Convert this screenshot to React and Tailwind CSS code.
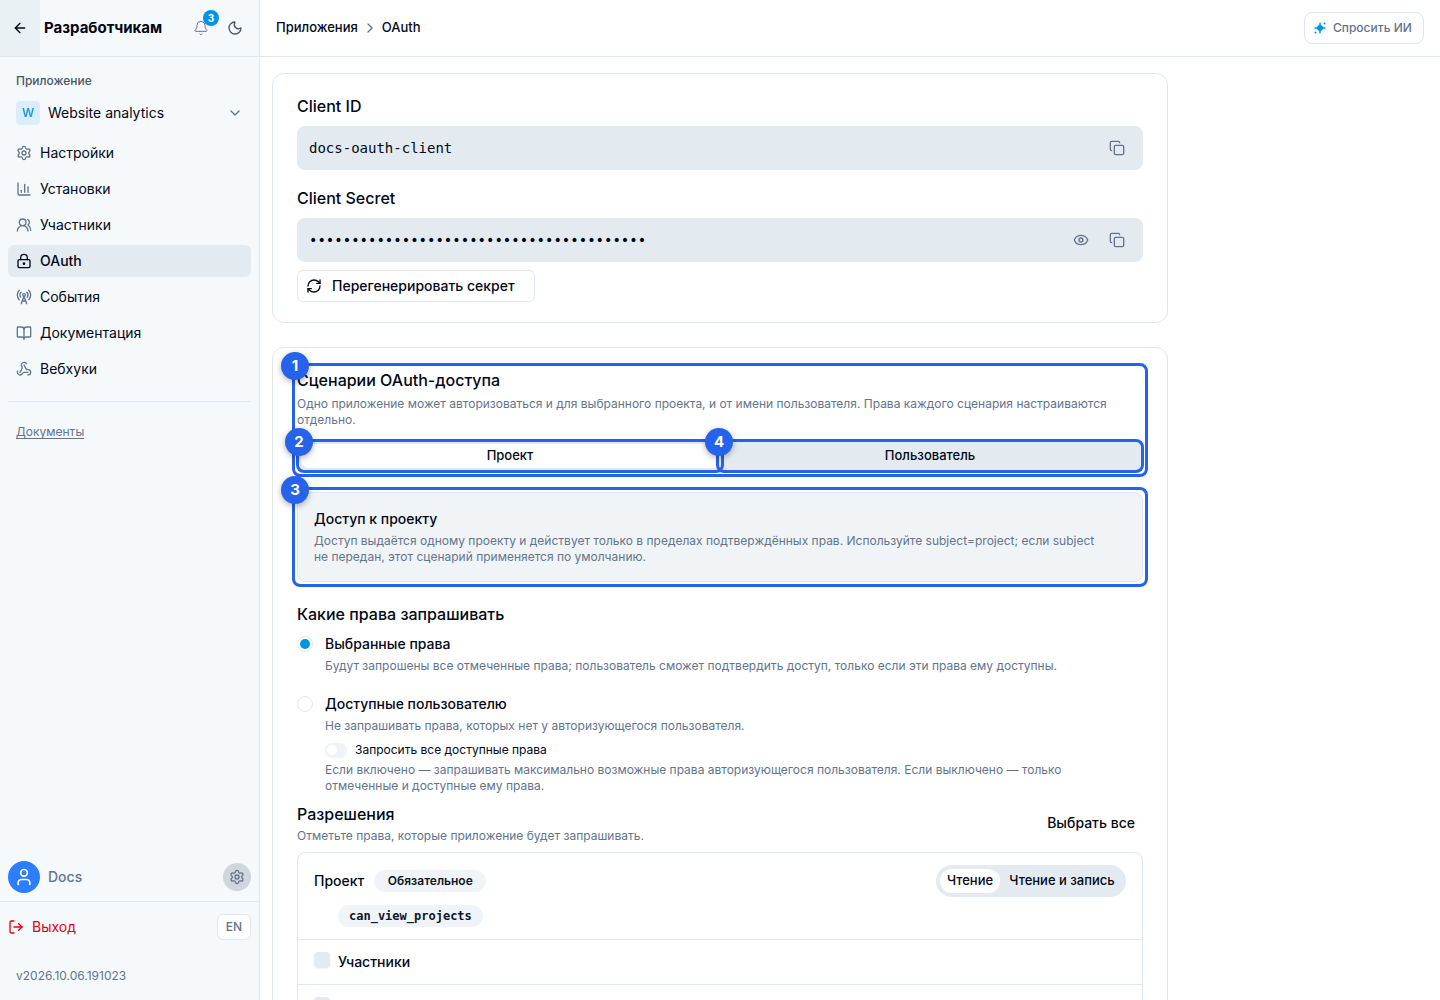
import { useState } from 'react';
import {
  ArrowLeft,
  Bell,
  BookOpen,
  ChartColumn,
  ChevronDown,
  ChevronRight,
  Copy,
  Eye,
  LockKeyhole,
  LogOut,
  Moon,
  RadioTower,
  RefreshCw,
  Settings,
  User,
  UsersRound,
  Webhook,
} from 'lucide-react';

const NAV = [
  { label: 'Настройки', icon: Settings },
  { label: 'Установки', icon: ChartColumn },
  { label: 'Участники', icon: UsersRound },
  { label: 'OAuth', icon: LockKeyhole, active: true },
  { label: 'События', icon: RadioTower },
  { label: 'Документация', icon: BookOpen },
  { label: 'Вебхуки', icon: Webhook },
];

const SCENARIOS = [
  { id: 'project', label: 'Проект', step: 2 },
  { id: 'user', label: 'Пользователь', step: 4 },
];

const MODES = [
  { label: 'Чтение', width: 'min-w-15' },
  { label: 'Чтение и запись', width: 'min-w-30' },
];

const GROUPS = [{ id: 'members', name: 'Участники' }, { id: 'events' }];

function SparkleIcon() {
  return (
    <svg width="14" height="14" viewBox="0 0 14 14" fill="#0095e0" aria-hidden="true">
      <path d="M7 1.500c.5 3 2 4.800 5.500 5.500-3.500.7-5 2.500-5.500 5.500C6.500 9.500 5 7.700 1.500 7 5 6.300 6.500 4.500 7 1.500z" stroke="#0095e0" strokeWidth="0.6" />
      <circle cx="11.500" cy="2.500" r="1" />
      <circle cx="2.500" cy="11.500" r="1" />
    </svg>
  );
}

// numbered outline drawn around its nearest relative parent
function Marker({ step, className = '-inset-[5px]' }) {
  return (
    <div className={`pointer-events-none absolute z-10 rounded-lg border-3 border-[#2563eb] ${className}`}>
      <span className="absolute -top-3.5 -left-3.5 flex size-7 items-center justify-center rounded-full bg-[#2563eb] text-[15px] font-bold text-white shadow-[0_2px_6px_rgba(0,0,0,0.3)]">
        {step}
      </span>
    </div>
  );
}

function Sidebar() {
  return (
    <aside className="flex w-65 shrink-0 flex-col border-r border-[#e0e7ef] bg-[#f5f9fc]">
      <div className="flex h-14.25 items-center border-b border-[#e0e7ef] pr-4">
        <button aria-label="Назад" className="flex h-full w-10 items-center justify-center bg-[#eaf1f4]">
          <ArrowLeft size={16} />
        </button>
        <span className="ml-1 flex-1 text-[15px] font-bold">Разработчикам</span>
        <button aria-label="Уведомления" className="relative text-[#64748b]">
          <Bell size={16} strokeWidth={1.5} />
          <span className="absolute -top-2.5 -right-2.5 flex size-4 items-center justify-center rounded-full bg-[#0095e0] text-[10px] font-bold text-white">
            3
          </span>
        </button>
        <button aria-label="Тёмная тема" className="ml-4.5 text-[#4b5563]">
          <Moon size={16} />
        </button>
      </div>

      <div className="px-2 pt-4">
        <div className="px-2 text-xs font-medium text-[#4b5563]">Приложение</div>
        <button className="mt-2 flex h-8 w-full items-center gap-2 px-2 text-left text-sm">
          <span className="flex size-6 items-center justify-center rounded bg-[#d9eefa] text-xs font-medium text-[#0095e0]">W</span>
          <span className="flex-1">Website analytics</span>
          <ChevronDown size={16} className="text-[#64748b]" />
        </button>
        <nav className="mt-2 flex flex-col gap-1">
          {NAV.map(({ label, icon: Icon, active }) => (
            <a
              key={label}
              href="#"
              className={`flex h-8 items-center gap-2 rounded-md px-2 text-sm ${active ? 'bg-[#e3ebf1] font-medium' : ''}`}
            >
              <Icon size={16} className={active ? '' : 'text-[#64748b]'} />
              {label}
            </a>
          ))}
        </nav>
        <hr className="mt-4 border-[#e0e7ef]" />
        <a href="#" className="mt-5.5 ml-2 inline-block text-xs text-[#64748b] underline underline-offset-2">Документы</a>
      </div>

      <div className="mt-auto">
        <div className="flex items-center gap-2 border-b border-[#e0e7ef] px-2 pb-2">
          <span className="flex size-8 items-center justify-center rounded-full bg-[#2b7fff] text-white">
            <User size={20} />
          </span>
          <span className="flex-1 text-sm font-medium text-[#64748b]">Docs</span>
          <button aria-label="Настройки профиля" className="flex size-7 items-center justify-center rounded-full bg-[#d1d5dc] text-[#64748b]">
            <Settings size={16} />
          </button>
        </div>
        <div className="flex items-center justify-between px-2 pt-3">
          <button className="flex items-center gap-2 text-sm text-[#e7000b]">
            <LogOut size={16} />
            Выход
          </button>
          <button className="h-6.5 rounded-md border border-[#e0e7ef] bg-white px-2 text-xs font-medium text-[#64748b]">EN</button>
        </div>
        <div className="px-4 pt-7 pb-4 text-xs text-[#64748b]">v2026.10.06.191023</div>
      </div>
    </aside>
  );
}

function SecretField({ label, value, hidden }) {
  return (
    <div>
      <h2 className="mb-3 text-base leading-4 font-medium">{label}</h2>
      <div className="flex h-11 items-center rounded-lg bg-[#e3ebf1] pr-4.5 pl-3 text-[#64748b]">
        <code className="flex-1 font-['DejaVu_Sans_Mono',monospace] text-sm text-[#020817]">{value}</code>
        {hidden && (
          <button aria-label="Показать">
            <Eye size={16} />
          </button>
        )}
        <button aria-label="Копировать" className="ml-5">
          <Copy size={16} />
        </button>
      </div>
    </div>
  );
}

function RightsOption({ id, title, text, checked, onChange, children }) {
  return (
    <div className="flex gap-3">
      <input
        type="radio"
        id={id}
        name="rights"
        checked={checked}
        onChange={onChange}
        className="mt-0.5 size-4 shrink-0 appearance-none rounded-full border border-[#e0e7ef] bg-white bg-clip-content p-[2px] checked:bg-[#0095e0]"
      />
      <div>
        <label htmlFor={id} className="block text-sm font-medium">{title}</label>
        <p className="mt-1 text-xs text-[#64748b]">{text}</p>
        {children}
      </div>
    </div>
  );
}

export default function App() {
  const [scenario, setScenario] = useState('project');
  const [rights, setRights] = useState('selected');
  const [access, setAccess] = useState('Чтение');

  return (
    <div className="flex h-screen bg-white font-['Inter',sans-serif] text-[#020817]">
      <Sidebar />
      <div className="flex min-w-0 flex-1 flex-col">
        <header className="flex h-14.25 shrink-0 items-center justify-between border-b border-[#e0e7ef] px-4">
          <nav className="flex items-center gap-1 text-[13px] font-medium">
            <a href="#">Приложения</a>
            <ChevronRight size={16} className="text-[#64748b]" />
            <span>OAuth</span>
          </nav>
          <button className="flex h-8 min-w-30 items-center gap-1.5 rounded-lg border border-[#e0e7ef] px-2 text-xs font-medium text-[#64748b]">
            <SparkleIcon />
            Спросить ИИ
          </button>
        </header>

        <main className="flex-1 overflow-y-auto px-3 py-4 [scrollbar-width:none]">
          <div className="flex max-w-4xl flex-col gap-6">
            <section className="rounded-xl border border-[#e0e7ef] px-6 pt-6 pb-5">
              <div className="flex flex-col gap-5">
                <SecretField label="Client ID" value="docs-oauth-client" />
                <SecretField label="Client Secret" value={'•'.repeat(40)} hidden />
              </div>
              <button className="mt-2 flex h-8 min-w-59.5 items-center gap-2.5 rounded-md border border-[#e0e7ef] px-2 text-sm font-medium">
                <RefreshCw size={16} />
                Перегенерировать секрет
              </button>
            </section>

            <section className="rounded-xl border border-[#e0e7ef] p-6">
              <div className="relative">
                <Marker step={1} className="-inset-x-[5px] -top-[9px] -bottom-[5px]" />
                <h2 className="text-base leading-4 font-medium">Сценарии OAuth-доступа</h2>
                <p className="mt-2 text-xs text-[#64748b]">
                  Одно приложение может авторизоваться и для выбранного проекта, и от имени пользователя. Права каждого
                  сценария настраиваются отдельно.
                </p>
                <div role="tablist" className="mt-3 grid grid-cols-2 gap-0.5 rounded-lg bg-[#e3ebf1] p-1">
                  {SCENARIOS.map((s) => (
                    <button
                      key={s.id}
                      role="tab"
                      aria-selected={scenario === s.id}
                      onClick={() => setScenario(s.id)}
                      className={`relative h-6 rounded-lg text-[13px] font-medium ${scenario === s.id ? 'bg-white' : ''}`}
                    >
                      {s.label}
                      <Marker step={s.step} />
                    </button>
                  ))}
                </div>
              </div>

              <div className="relative mt-5 rounded-lg border border-[#e0e7ef] bg-[#f0f4f7] p-4">
                <Marker step={3} className="-inset-[6px]" />
                <h3 className="text-sm font-medium">Доступ к проекту</h3>
                <p className="mt-1 pr-4 text-xs text-[#64748b]">
                  Доступ выдаётся одному проекту и действует только в пределах подтверждённых прав. Используйте
                  subject=project; если subject не передан, этот сценарий применяется по умолчанию.
                </p>
              </div>

              <h2 className="mt-6 text-base leading-4 font-medium">Какие права запрашивать</h2>
              <div className="mt-3 flex flex-col gap-5">
                <RightsOption
                  id="rights-selected"
                  title="Выбранные права"
                  text="Будут запрошены все отмеченные права; пользователь сможет подтвердить доступ, только если эти права ему доступны."
                  checked={rights === 'selected'}
                  onChange={() => setRights('selected')}
                />
                <RightsOption
                  id="rights-available"
                  title="Доступные пользователю"
                  text="Не запрашивать права, которых нет у авторизующегося пользователя."
                  checked={rights === 'available'}
                  onChange={() => setRights('available')}
                >
                  <label className="mt-2 flex items-center gap-2 text-xs">
                    <input
                      type="checkbox"
                      role="switch"
                      className="h-3.5 w-5.5 appearance-none rounded-full bg-[#f0f4f8] p-0.5 shadow-xs before:block before:size-2.5 before:rounded-full before:bg-white checked:bg-[#0095e0] checked:before:ml-2"
                    />
                    Запросить все доступные права
                  </label>
                  <p className="mt-1 pr-4 text-xs text-[#64748b]">
                    Если включено — запрашивать максимально возможные права авторизующегося пользователя. Если выключено —
                    только отмеченные и доступные ему права.
                  </p>
                </RightsOption>
              </div>

              <div className="mt-3 flex items-start justify-between">
                <div>
                  <h2 className="text-base leading-4 font-medium">Разрешения</h2>
                  <p className="mt-1.5 text-xs text-[#64748b]">Отметьте права, которые приложение будет запрашивать.</p>
                </div>
                <button className="h-8.5 px-2 text-sm font-medium">Выбрать все</button>
              </div>

              <div className="mt-2 divide-y divide-[#e0e7ef] rounded-lg border border-[#e0e7ef]">
                <div className="px-4 py-3">
                  <div className="flex items-center gap-2.5">
                    <span className="text-sm font-medium">Проект</span>
                    <span className="min-w-28 rounded-full bg-[#f0f4f9] px-[11px] py-[3px] text-center text-xs font-semibold text-[#0f172a]">
                      Обязательное
                    </span>
                    <div className="ml-auto flex gap-0.5 rounded-full bg-[#e3ebf1] p-1">
                      {MODES.map(({ label, width }) => (
                        <button
                          key={label}
                          onClick={() => setAccess(label)}
                          className={`h-6 rounded-full px-1.5 text-[13px] font-medium ${width} ${access === label ? 'bg-white' : ''}`}
                        >
                          {label}
                        </button>
                      ))}
                    </div>
                  </div>
                  <div className="mt-2 flex pl-6">
                    <code className="rounded-full bg-[#f0f4f9] px-[11px] py-[3px] font-['DejaVu_Sans_Mono',monospace] text-xs font-semibold text-[#0f172a]">
                      can_view_projects
                    </code>
                  </div>
                </div>
                {GROUPS.map(({ id, name }) => (
                  <label key={id} className="flex items-start gap-2 px-4 py-3 text-sm font-medium">
                    <input
                      type="checkbox"
                      aria-label={name || id}
                      className="size-4 appearance-none rounded bg-[#e3ebf1] shadow-xs checked:bg-[#0095e0]"
                    />
                    {name}
                  </label>
                ))}
              </div>
            </section>
          </div>
        </main>
      </div>
    </div>
  );
}
